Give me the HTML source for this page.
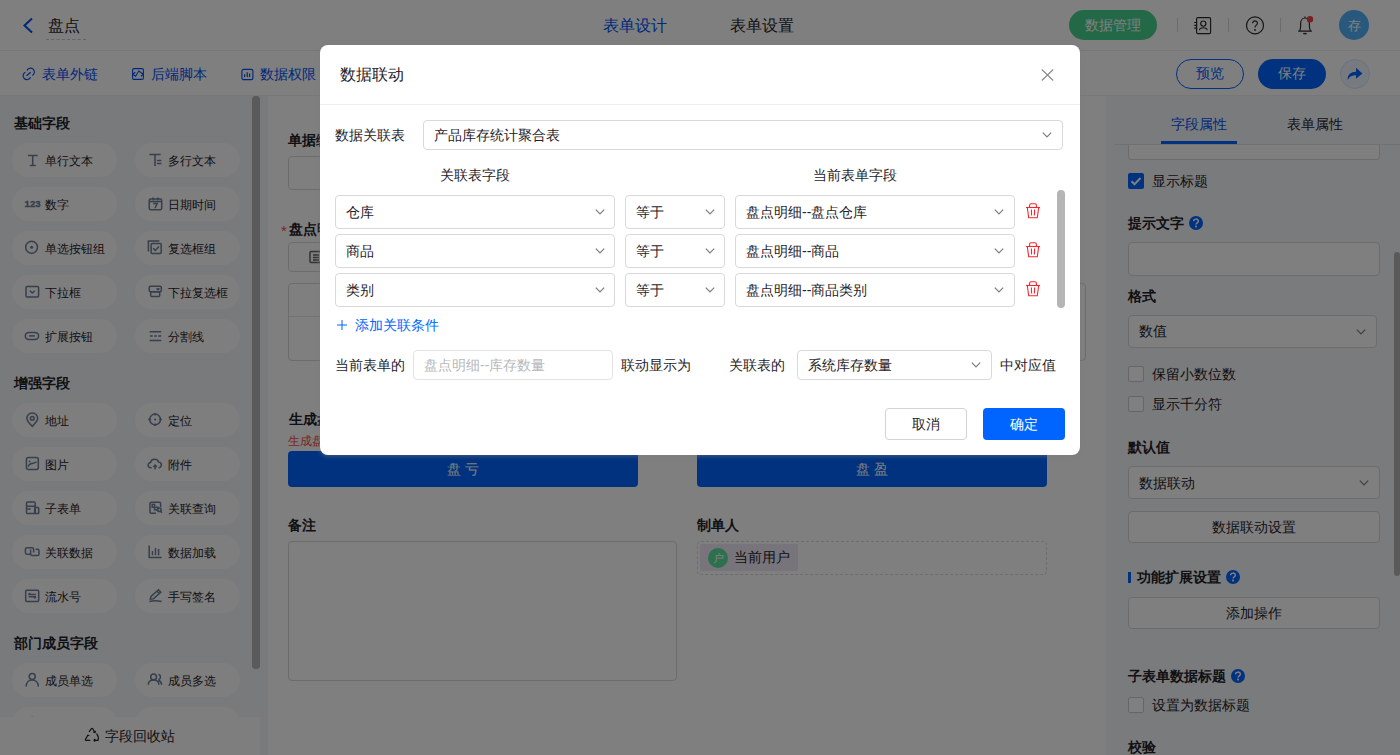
<!DOCTYPE html>
<html><head><meta charset="utf-8"><title>盘点</title>
<style>
*{box-sizing:border-box;margin:0;padding:0}
html,body{width:1400px;height:755px;overflow:hidden;background:#fff}
body{position:relative;font-family:"Liberation Sans",sans-serif;color:#1f2329;font-size:14px}
.a{position:absolute;white-space:nowrap}
svg{display:block}
.pill{position:absolute;height:34px;width:105px;border-radius:17px;background:#fcfcfd}
.pill .ic{position:absolute;left:14px;top:9px;width:16px;height:16px}
.pill .tx{position:absolute;left:33px;top:0;line-height:34px;font-size:12px;color:#1f2329}
.sec{position:absolute;left:14px;font-size:14px;font-weight:bold;line-height:20px;color:#1f2329}
.lbl{position:absolute;font-size:14px;font-weight:bold;line-height:20px;color:#1f2329}
.inp{position:absolute;background:#fff;border:1px solid #d9d9d9;border-radius:4px}
.sel{position:absolute;background:#fff;border:1px solid #d9d9d9;border-radius:4px}
.sel .tx{position:absolute;left:10px;top:0;font-size:14px;color:#1f2329}
.chev{position:absolute;width:10px;height:6px}
.q{position:absolute;width:15px;height:15px;border-radius:50%;background:#0064ff;color:#fff;font-size:11px;font-weight:bold;text-align:center;line-height:15px}
.cb{position:absolute;width:16px;height:16px;border:1px solid #c9cdd4;border-radius:2px;background:#fff}
</style></head><body>

<div class="a" style="left:0;top:0;width:1400px;height:51px;background:#fff;border-bottom:1px solid #eeeeee"></div>
<svg class="a" style="left:22px;top:17px" width="12" height="17" viewBox="0 0 12 17"><path d="M10 1.5 L2.5 8.5 L10 15.5" fill="none" stroke="#0050f5" stroke-width="2"/></svg>
<div class="a" style="left:48px;top:15px;font-size:16px;line-height:22px;color:#1f2329">盘点</div>
<div class="a" style="left:46px;top:39px;width:40px;height:0;border-top:1px dashed #c8c8c8"></div>
<div class="a" style="left:603px;top:15px;font-size:16px;line-height:22px;color:#0050f5">表单设计</div>
<div class="a" style="left:730px;top:15px;font-size:16px;line-height:22px;color:#1f2329">表单设置</div>
<div class="a" style="left:1069px;top:10px;width:88px;height:30px;border-radius:15px;background:#47d18f;color:#fff;font-size:14px;line-height:30px;text-align:center">数据管理</div>
<div class="a" style="left:1177px;top:18px;width:1px;height:14px;background:#d8d8d8"></div>
<div class="a" style="left:1228px;top:18px;width:1px;height:14px;background:#d8d8d8"></div>
<div class="a" style="left:1280px;top:18px;width:1px;height:14px;background:#d8d8d8"></div>
<svg class="a" style="left:1193px;top:16px" width="19" height="19" viewBox="0 0 19 19" fill="none" stroke="#2b2b2b" stroke-width="1.15"><rect x="3.6" y="1.6" width="14" height="16" rx="1.3"/><circle cx="10.3" cy="7.6" r="2.6"/><path d="M6.4 14.2 C6.8 10.9 13.8 10.9 14.2 14.2"/><path d="M1.2 6.5h3M1.2 9.3h3M1.2 12.1h3"/></svg>
<svg class="a" style="left:1245px;top:15px" width="20" height="20" viewBox="0 0 20 20" fill="none" stroke="#2b2b2b" stroke-width="1.2"><circle cx="10" cy="10.4" r="8.5"/><path d="M7.6 8.2 C7.6 5.2 12.4 5.2 12.4 8.2 C12.4 10.2 10 10.2 10 12.6"/><circle cx="10" cy="15" r="0.9" fill="#2b2b2b" stroke="none"/></svg>
<svg class="a" style="left:1296px;top:14px" width="20" height="22" viewBox="0 0 20 22" fill="none" stroke="#2b2b2b" stroke-width="1.2"><path d="M2.2 17.2 h13.6 M3.5 17.2 C4.5 16 4.6 14.5 4.6 12 V9.5 C4.6 6.3 6.6 4 9 4 C11.4 4 13.4 6.3 13.4 9.5 V12 C13.4 14.5 13.5 16 14.8 17.2"/><path d="M9 2.5v1.3"/><path d="M7.3 19.6 h3.4" stroke-width="1.4"/><circle cx="14" cy="5.2" r="3.2" fill="#ee4040" stroke="none"/></svg>
<div class="a" style="left:1339px;top:10px;width:30px;height:30px;border-radius:50%;background:#50b2f8;color:#fff;font-size:13px;line-height:31px;text-align:center">存</div>
<div class="a" style="left:0;top:51px;width:1400px;height:45px;background:#fff;border-bottom:1px solid #efefef"></div>
<svg class="a" style="left:21px;top:66px" width="15" height="15" viewBox="0 0 15 15" fill="none" stroke="#0050f5" stroke-width="1.15"><path d="M6 4.4A3.85 3.85 0 1 1 11.3 9.4"/><path d="M4.4 6.2A3.85 3.85 0 1 0 9.5 11.2"/><path d="M5.5 9.8L9.7 6.2"/></svg>
<div class="a" style="left:42px;top:64px;font-size:14px;line-height:20px;color:#0050f5">表单外链</div>
<svg class="a" style="left:132px;top:68px" width="12" height="12" viewBox="0 0 12 12" fill="none" stroke="#0050f5" stroke-width="1.1"><rect x="0.6" y="0.6" width="10.8" height="10.8" rx="1.4"/><path d="M0.6 6.3L3.4 4.2M0.6 6.3L3.6 8.2L6.8 3L11.4 6.3L8.8 8.2"/></svg>
<div class="a" style="left:151px;top:64px;font-size:14px;line-height:20px;color:#0050f5">后端脚本</div>
<svg class="a" style="left:241px;top:68px" width="13" height="13" viewBox="0 0 13 13" fill="none" stroke="#0050f5" stroke-width="1.15"><rect x="0.9" y="1.4" width="11" height="10.2" rx="1.6"/><path d="M3.6 6.2V8.9M6.2 4.2V8.9M8.6 5.6V8.9" stroke-width="1.2"/></svg>
<div class="a" style="left:260px;top:64px;font-size:14px;line-height:20px;color:#0050f5">数据权限</div>
<div class="a" style="left:1176px;top:59px;width:68px;height:30px;border-radius:15px;border:1px solid #0064ff;color:#0064ff;font-size:14px;line-height:27px;text-align:center;background:#fff">预览</div>
<div class="a" style="left:1258px;top:59px;width:68px;height:30px;border-radius:15px;background:#0064ff;color:#fff;font-size:14px;line-height:29px;text-align:center">保存</div>
<div class="a" style="left:1340px;top:59px;width:30px;height:30px;border-radius:50%;background:#eef4ff;border:1px solid #d6e4ff"></div>
<svg class="a" style="left:1347px;top:67px" width="16" height="14" viewBox="0 0 16 14"><path d="M0.6 13 C0.6 7.5 3.8 4.8 9 4.8 V0.8 L15.4 6.4 L9 11.8 V8.2 C5.2 8.2 2.6 9.6 0.6 13 Z" fill="#0064ff"/></svg>
<div class="a" style="left:0;top:96px;width:268px;height:659px;background:#f3f5f8"></div>
<div class="a" style="left:252px;top:96px;width:8px;height:573px;border-radius:4px;background:#b4b4b4"></div>
<div class="sec" style="top:113px">基础字段</div>
<div class="pill" style="left:12px;top:143px"></div>
<svg class="a" style="left:24px;top:152px" width="17" height="17" viewBox="0 0 17 17" fill="none" stroke="#6e7d99" stroke-width="1.5"><path d="M4 3.4H13.7M8.7 3.4V13.4M5.8 13.4H11.8"/></svg>
<div class="a" style="left:45px;top:151px;font-size:12px;line-height:20px;color:#1f2329">单行文本</div>
<div class="pill" style="left:135px;top:143px"></div>
<svg class="a" style="left:147px;top:152px" width="17" height="17" viewBox="0 0 17 17" fill="none" stroke="#6e7d99" stroke-width="1.5"><path d="M2.4 2.6H13.6M8 2.6V14M9.9 8.6H14.4M9.9 11.4H14.4"/></svg>
<div class="a" style="left:168px;top:151px;font-size:12px;line-height:20px;color:#1f2329">多行文本</div>
<div class="pill" style="left:12px;top:187px"></div>
<svg class="a" style="left:24px;top:196px" width="17" height="17" viewBox="0 0 17 17" fill="none" stroke="#6e7d99" stroke-width="1.5"><text x="0.6" y="11" font-size="9.6" font-weight="bold" font-family="Liberation Sans" fill="#6e7d99" stroke="#6e7d99" stroke-width="0.35">123</text></svg>
<div class="a" style="left:45px;top:195px;font-size:12px;line-height:20px;color:#1f2329">数字</div>
<div class="pill" style="left:135px;top:187px"></div>
<svg class="a" style="left:147px;top:196px" width="17" height="17" viewBox="0 0 17 17" fill="none" stroke="#6e7d99" stroke-width="1.5"><rect x="2.2" y="3" width="12.5" height="10.7" rx="1.5"/><path d="M2.2 5.6H14.7M5.9 1.6V4.2M10.9 1.6V4.2M6.2 7.6H10.2L8 12.2"/></svg>
<div class="a" style="left:168px;top:195px;font-size:12px;line-height:20px;color:#1f2329">日期时间</div>
<div class="pill" style="left:12px;top:231px"></div>
<svg class="a" style="left:24px;top:240px" width="17" height="17" viewBox="0 0 17 17" fill="none" stroke="#6e7d99" stroke-width="1.5"><circle cx="7.6" cy="7.25" r="5.9"/><circle cx="7.6" cy="7.25" r="1.5" fill="#6e7d99" stroke="none"/></svg>
<div class="a" style="left:45px;top:239px;font-size:12px;line-height:20px;color:#1f2329">单选按钮组</div>
<div class="pill" style="left:135px;top:231px"></div>
<svg class="a" style="left:147px;top:240px" width="17" height="17" viewBox="0 0 17 17" fill="none" stroke="#6e7d99" stroke-width="1.5"><path d="M1.4 11.4V1.1H12.3"/><rect x="4.1" y="3.4" width="10.1" height="10.2" rx="1"/><path d="M6.2 8.3L8.2 10.4L12 6.4"/></svg>
<div class="a" style="left:168px;top:239px;font-size:12px;line-height:20px;color:#1f2329">复选框组</div>
<div class="pill" style="left:12px;top:275px"></div>
<svg class="a" style="left:24px;top:284px" width="17" height="17" viewBox="0 0 17 17" fill="none" stroke="#6e7d99" stroke-width="1.5"><rect x="2" y="2.4" width="12.6" height="10.6" rx="1.2"/><path d="M5.9 6.8L8.3 9L10.7 6.8"/></svg>
<div class="a" style="left:45px;top:283px;font-size:12px;line-height:20px;color:#1f2329">下拉框</div>
<div class="pill" style="left:135px;top:275px"></div>
<svg class="a" style="left:147px;top:284px" width="17" height="17" viewBox="0 0 17 17" fill="none" stroke="#6e7d99" stroke-width="1.5"><rect x="2.2" y="2.2" width="12.1" height="5.6" rx="1.2"/><rect x="3.7" y="7.8" width="9" height="4.6" rx="1"/><path d="M9.6 4.4L11 5.8L12.4 4.4"/></svg>
<div class="a" style="left:168px;top:283px;font-size:12px;line-height:20px;color:#1f2329">下拉复选框</div>
<div class="pill" style="left:12px;top:319px"></div>
<svg class="a" style="left:24px;top:328px" width="17" height="17" viewBox="0 0 17 17" fill="none" stroke="#6e7d99" stroke-width="1.5"><rect x="1.3" y="4.4" width="13.3" height="7" rx="3.5"/><path d="M5 7.9H11"/></svg>
<div class="a" style="left:45px;top:327px;font-size:12px;line-height:20px;color:#1f2329">扩展按钮</div>
<div class="pill" style="left:135px;top:319px"></div>
<svg class="a" style="left:147px;top:328px" width="17" height="17" viewBox="0 0 17 17" fill="none" stroke="#6e7d99" stroke-width="1.5"><path d="M2.6 3.7H14.3M2.6 12.4H14.3M3 8.1H5.7M7.2 8.1H9.8M11.2 8.1H14.3"/></svg>
<div class="a" style="left:168px;top:327px;font-size:12px;line-height:20px;color:#1f2329">分割线</div>
<div class="sec" style="top:373px">增强字段</div>
<div class="pill" style="left:12px;top:403px"></div>
<svg class="a" style="left:24px;top:412px" width="17" height="17" viewBox="0 0 17 17" fill="none" stroke="#6e7d99" stroke-width="1.5"><path d="M8.25 14.4C4.6 10.8 2.85 8.6 2.85 6.3A5.4 5.4 0 0 1 13.65 6.3C13.65 8.6 11.9 10.8 8.25 14.4Z"/><circle cx="8.25" cy="6.3" r="1.9"/></svg>
<div class="a" style="left:45px;top:411px;font-size:12px;line-height:20px;color:#1f2329">地址</div>
<div class="pill" style="left:135px;top:403px"></div>
<svg class="a" style="left:147px;top:412px" width="17" height="17" viewBox="0 0 17 17" fill="none" stroke="#6e7d99" stroke-width="1.5"><circle cx="8.1" cy="7.5" r="5.4"/><path d="M8.1 0.9V3.6M8.1 11.4V14.1M1.3 7.5H4M12.2 7.5H14.9"/><circle cx="8.1" cy="7.5" r="1.1" fill="#6e7d99" stroke="none"/></svg>
<div class="a" style="left:168px;top:411px;font-size:12px;line-height:20px;color:#1f2329">定位</div>
<div class="pill" style="left:12px;top:447px"></div>
<svg class="a" style="left:24px;top:456px" width="17" height="17" viewBox="0 0 17 17" fill="none" stroke="#6e7d99" stroke-width="1.5"><rect x="2.4" y="1.4" width="11.9" height="12.1" rx="2"/><circle cx="5.6" cy="5.4" r="0.9" fill="#6e7d99" stroke="none"/><path d="M4 10.6C5 8.2 6 7.6 8 7.4S11 7 12.5 5.7"/></svg>
<div class="a" style="left:45px;top:455px;font-size:12px;line-height:20px;color:#1f2329">图片</div>
<div class="pill" style="left:135px;top:447px"></div>
<svg class="a" style="left:147px;top:456px" width="17" height="17" viewBox="0 0 17 17" fill="none" stroke="#6e7d99" stroke-width="1.5"><path d="M4.6 11.8H3.9A2.6 2.6 0 0 1 3.5 6.6A4.2 4.2 0 0 1 11.6 6.1A2.9 2.9 0 0 1 12.2 11.8H11.6"/><path d="M8.1 9.2V13.6M6.3 10.9L8.1 9L9.9 10.9"/></svg>
<div class="a" style="left:168px;top:455px;font-size:12px;line-height:20px;color:#1f2329">附件</div>
<div class="pill" style="left:12px;top:491px"></div>
<svg class="a" style="left:24px;top:500px" width="17" height="17" viewBox="0 0 17 17" fill="none" stroke="#6e7d99" stroke-width="1.5"><rect x="2.5" y="2" width="8.7" height="11.6" rx="1.2"/><path d="M2.5 6.2H11.2M3 8.9H6.7"/><rect x="10.7" y="7.5" width="4" height="6.1" rx="0.8"/></svg>
<div class="a" style="left:45px;top:499px;font-size:12px;line-height:20px;color:#1f2329">子表单</div>
<div class="pill" style="left:135px;top:491px"></div>
<svg class="a" style="left:147px;top:500px" width="17" height="17" viewBox="0 0 17 17" fill="none" stroke="#6e7d99" stroke-width="1.5"><path d="M13.6 7.3V3.4Q13.6 2.2 12.4 2.2H4.2Q3 2.2 3 3.4V12Q3 13.2 4.2 13.2H9"/><rect x="5.2" y="4.4" width="2.4" height="2.8"/><rect x="7.6" y="7.3" width="3.2" height="2.6"/><circle cx="12.3" cy="9.8" r="1.8"/><path d="M13.5 11.2L14.8 12.8"/></svg>
<div class="a" style="left:168px;top:499px;font-size:12px;line-height:20px;color:#1f2329">关联查询</div>
<div class="pill" style="left:12px;top:535px"></div>
<svg class="a" style="left:24px;top:544px" width="17" height="17" viewBox="0 0 17 17" fill="none" stroke="#6e7d99" stroke-width="1.5"><path d="M6.2 10.2H3Q1.4 10.2 1.4 8.6V5.3Q1.4 3.7 3 3.7H8Q9.6 3.7 9.6 5.3V8.4"/><path d="M6.6 5.6V9.9Q6.6 11.5 8.2 11.5H13.4Q15 11.5 15 9.9V6.9Q15 5.3 13.4 5.3H11.6"/></svg>
<div class="a" style="left:45px;top:543px;font-size:12px;line-height:20px;color:#1f2329">关联数据</div>
<div class="pill" style="left:135px;top:535px"></div>
<svg class="a" style="left:147px;top:544px" width="17" height="17" viewBox="0 0 17 17" fill="none" stroke="#6e7d99" stroke-width="1.5"><path d="M2.2 1.4V13.4H14.7M5.5 7V11.2M8.5 4V11.2M11.6 5V11.2"/></svg>
<div class="a" style="left:168px;top:543px;font-size:12px;line-height:20px;color:#1f2329">数据加载</div>
<div class="pill" style="left:12px;top:579px"></div>
<svg class="a" style="left:24px;top:588px" width="17" height="17" viewBox="0 0 17 17" fill="none" stroke="#6e7d99" stroke-width="1.5"><rect x="1.7" y="2.2" width="13" height="11.2" rx="1.2"/><path d="M4.3 6.5H11.8M4.3 6.5L6.2 5M4.6 8.8H12M12 8.8L10.2 10.4"/></svg>
<div class="a" style="left:45px;top:587px;font-size:12px;line-height:20px;color:#1f2329">流水号</div>
<div class="pill" style="left:135px;top:579px"></div>
<svg class="a" style="left:147px;top:588px" width="17" height="17" viewBox="0 0 17 17" fill="none" stroke="#6e7d99" stroke-width="1.5"><path d="M3.3 11.2L4 8.5L11.5 1.8L13.8 4.2L6.3 10.9Z"/><path d="M10 3.2L12.3 5.5M2.3 13.4Q8 12 14.6 13.6"/></svg>
<div class="a" style="left:168px;top:587px;font-size:12px;line-height:20px;color:#1f2329">手写签名</div>
<div class="sec" style="top:633px">部门成员字段</div>
<div class="pill" style="left:12px;top:663px"></div>
<svg class="a" style="left:24px;top:672px" width="17" height="17" viewBox="0 0 17 17" fill="none" stroke="#6e7d99" stroke-width="1.5"><circle cx="8.2" cy="4.6" r="3"/><path d="M2.2 14.5C2.2 10.5 4.8 8 8.2 8S14.3 10.5 14.3 14.5"/></svg>
<div class="a" style="left:45px;top:671px;font-size:12px;line-height:20px;color:#1f2329">成员单选</div>
<div class="pill" style="left:135px;top:663px"></div>
<svg class="a" style="left:147px;top:672px" width="17" height="17" viewBox="0 0 17 17" fill="none" stroke="#6e7d99" stroke-width="1.5"><circle cx="6.6" cy="5" r="2.9"/><path d="M11.4 2.2A2.9 2.9 0 0 1 11.4 7.8"/><path d="M1.3 12.8C1.3 9.5 3.6 7.9 6.6 7.9S11.9 9.5 11.9 12.8M11.4 8.3C13.2 8.9 14.5 10.5 14.5 12.8"/></svg>
<div class="a" style="left:168px;top:671px;font-size:12px;line-height:20px;color:#1f2329">成员多选</div>
<div class="pill" style="left:12px;top:707px"></div>
<svg class="a" style="left:24px;top:716px" width="17" height="17" viewBox="0 0 17 17" fill="none" stroke="#6e7d99" stroke-width="1.5"><circle cx="8.2" cy="4.6" r="3"/><path d="M2.2 14.5C2.2 10.5 4.8 8 8.2 8S14.3 10.5 14.3 14.5"/></svg>
<div class="a" style="left:45px;top:715px;font-size:12px;line-height:20px;color:#1f2329">部门单选</div>
<div class="pill" style="left:135px;top:707px"></div>
<svg class="a" style="left:147px;top:716px" width="17" height="17" viewBox="0 0 17 17" fill="none" stroke="#6e7d99" stroke-width="1.5"><circle cx="6.6" cy="5" r="2.9"/><path d="M11.4 2.2A2.9 2.9 0 0 1 11.4 7.8"/><path d="M1.3 12.8C1.3 9.5 3.6 7.9 6.6 7.9S11.9 9.5 11.9 12.8M11.4 8.3C13.2 8.9 14.5 10.5 14.5 12.8"/></svg>
<div class="a" style="left:168px;top:715px;font-size:12px;line-height:20px;color:#1f2329">部门多选</div>
<div class="a" style="left:252px;top:96px;width:8px;height:573px;border-radius:4px;background:#b4b4b4"></div>
<div class="a" style="left:0;top:717px;width:260px;height:38px;background:#fcfcfd"></div>
<svg class="a" style="left:84px;top:727px" width="16" height="16" viewBox="0 0 16 16" fill="none" stroke="#222" stroke-width="1.2"><path d="M5 4.8L7.4 1.6Q8 1 8.6 1.6L11 5.5"/><path d="M12.6 6.5L14.2 9.6Q14.6 10.6 14 13.3H10"/><path d="M6.3 13.3H2Q1.2 13.3 1.4 12.4L3.8 8.2"/><path d="M9.3 5.2L11 5.6L11.4 3.8M3.4 8.8L3.8 8.2L5.4 8.8M11.2 12L10 13.3L11.2 14.5"/></svg>
<div class="a" style="left:105px;top:726px;font-size:14px;line-height:20px;color:#1f2329">字段回收站</div>
<div class="lbl" style="left:288px;top:130px">单据编号</div>
<div class="inp" style="left:288px;top:156px;width:350px;height:34px"></div>
<div class="a" style="left:281px;top:221px;font-size:15px;line-height:20px;color:#f54a45">*</div>
<div class="lbl" style="left:289px;top:219px">盘点明细</div>
<div class="inp" style="left:288px;top:242px;width:350px;height:30px"></div>
<svg class="a" style="left:309px;top:250px" width="14" height="14" viewBox="0 0 14 14" fill="none" stroke="#666" stroke-width="1.5"><rect x="1" y="1.5" width="12" height="11" rx="1"/><path d="M4 5h6M4 7.5h6M4 10h6"/></svg>
<div class="inp" style="left:288px;top:283px;width:798px;height:78px"></div>
<div class="a" style="left:289px;top:316px;width:780px;height:1px;background:#e5e6eb"></div>
<div class="lbl" style="left:289px;top:409px">生成盘点单</div>
<div class="a" style="left:288px;top:433px;font-size:12px;line-height:16px;color:#f54a45">生成盘点单后不可修改</div>
<div class="a" style="left:288px;top:451px;width:350px;height:36px;border-radius:4px;background:#0064ff;color:#fff;font-size:14px;line-height:36px;text-align:center;letter-spacing:4px;padding-left:4px">盘亏</div>
<div class="a" style="left:697px;top:451px;width:350px;height:36px;border-radius:4px;background:#0064ff;color:#fff;font-size:14px;line-height:36px;text-align:center;letter-spacing:4px;padding-left:4px">盘盈</div>
<div class="lbl" style="left:288px;top:515px">备注</div>
<div class="inp" style="left:288px;top:541px;width:389px;height:140px"></div>
<div class="lbl" style="left:697px;top:515px">制单人</div>
<div class="a" style="left:697px;top:541px;width:350px;height:34px;border:1px dashed #dadada;border-radius:4px"></div>
<div class="a" style="left:700px;top:544px;width:98px;height:27px;background:#efe8f7;border-radius:2px"></div>
<div class="a" style="left:708px;top:548px;width:20px;height:20px;border-radius:50%;background:#5be09a;color:#fff;font-size:11px;line-height:20px;text-align:center">户</div>
<div class="a" style="left:734px;top:547px;font-size:14px;line-height:20px;color:#1f2329">当前用户</div>
<div class="a" style="left:1106px;top:96px;width:294px;height:659px;background:#f5f6f9"></div>
<div class="inp" style="left:1128px;top:120px;width:252px;height:40px;border-top:none;border-radius:0 0 4px 4px;z-index:0"></div>
<div class="a" style="left:1114px;top:96px;width:286px;height:49px;background:#f5f6f9;border-bottom:1px solid #e1e3e8"></div>
<div class="a" style="left:1171px;top:114px;font-size:14px;line-height:20px;color:#0050f5">字段属性</div>
<div class="a" style="left:1161px;top:141px;width:76px;height:3px;background:#0064ff"></div>
<div class="a" style="left:1287px;top:114px;font-size:14px;line-height:20px;color:#1f2329">表单属性</div>
<div class="a" style="left:1128px;top:173px;width:16px;height:16px;border-radius:2px;background:#0064ff"></div>
<svg class="a" style="left:1128px;top:173px" width="16" height="16" viewBox="0 0 16 16"><path d="M3.5 8.2l3 3 6-6.2" fill="none" stroke="#fff" stroke-width="2"/></svg>
<div class="a" style="left:1152px;top:171px;font-size:14px;line-height:20px;color:#1f2329">显示标题</div>
<div class="lbl" style="left:1128px;top:213px">提示文字</div>
<svg class="a" style="left:1189px;top:216px" width="14" height="14" viewBox="0 0 14 14"><circle cx="7" cy="7" r="7" fill="#0064ff"/><path d="M4.6 5.3C4.6 2.4 9.4 2.4 9.4 5.1C9.4 6.8 7 6.9 7 8.6" fill="none" stroke="#fff" stroke-width="1.45"/><rect x="6.1" y="9.6" width="1.8" height="1.8" fill="#fff"/></svg>
<div class="inp" style="left:1128px;top:242px;width:252px;height:34px"></div>
<div class="lbl" style="left:1128px;top:286px">格式</div>
<div class="sel" style="left:1128px;top:315px;width:249px;height:33px"></div>
<div class="a" style="left:1139px;top:321px;font-size:14px;line-height:20px;color:#1f2329">数值</div>
<svg class="a" style="left:1356px;top:329px" width="10" height="6" viewBox="0 0 10 6"><path d="M0.8 0.6L5 4.9 9.2 0.6" fill="none" stroke="#808080" stroke-width="1.3"/></svg>
<div class="cb" style="left:1128px;top:366px"></div>
<div class="a" style="left:1152px;top:364px;font-size:14px;line-height:20px;color:#1f2329">保留小数位数</div>
<div class="cb" style="left:1128px;top:396px"></div>
<div class="a" style="left:1152px;top:394px;font-size:14px;line-height:20px;color:#1f2329">显示千分符</div>
<div class="lbl" style="left:1128px;top:437px">默认值</div>
<div class="sel" style="left:1128px;top:466px;width:252px;height:33px"></div>
<div class="a" style="left:1139px;top:473px;font-size:14px;line-height:20px;color:#1f2329">数据联动</div>
<svg class="a" style="left:1359px;top:480px" width="10" height="6" viewBox="0 0 10 6"><path d="M0.8 0.6L5 4.9 9.2 0.6" fill="none" stroke="#808080" stroke-width="1.3"/></svg>
<div class="inp" style="left:1128px;top:511px;width:252px;height:32px;text-align:center;font-size:14px;line-height:30px;color:#1f2329">数据联动设置</div>
<div class="a" style="left:1128px;top:572px;width:3px;height:11px;background:#0064ff"></div>
<div class="lbl" style="left:1137px;top:567px">功能扩展设置</div>
<svg class="a" style="left:1226px;top:570px" width="14" height="14" viewBox="0 0 14 14"><circle cx="7" cy="7" r="7" fill="#0064ff"/><path d="M4.6 5.3C4.6 2.4 9.4 2.4 9.4 5.1C9.4 6.8 7 6.9 7 8.6" fill="none" stroke="#fff" stroke-width="1.45"/><rect x="6.1" y="9.6" width="1.8" height="1.8" fill="#fff"/></svg>
<div class="inp" style="left:1128px;top:597px;width:252px;height:32px;text-align:center;font-size:14px;line-height:30px;color:#1f2329">添加操作</div>
<div class="lbl" style="left:1128px;top:666px">子表单数据标题</div>
<svg class="a" style="left:1231px;top:669px" width="14" height="14" viewBox="0 0 14 14"><circle cx="7" cy="7" r="7" fill="#0064ff"/><path d="M4.6 5.3C4.6 2.4 9.4 2.4 9.4 5.1C9.4 6.8 7 6.9 7 8.6" fill="none" stroke="#fff" stroke-width="1.45"/><rect x="6.1" y="9.6" width="1.8" height="1.8" fill="#fff"/></svg>
<div class="cb" style="left:1128px;top:697px"></div>
<div class="a" style="left:1152px;top:695px;font-size:14px;line-height:20px;color:#1f2329">设置为数据标题</div>
<div class="lbl" style="left:1128px;top:737px">校验</div>
<div class="a" style="left:1394px;top:252px;width:6px;height:324px;border-radius:3px;background:#b4b4b4"></div>
<div class="a" style="left:0;top:0;width:1400px;height:755px;background:rgba(0,0,0,.5)"></div>
<div class="a" style="left:320px;top:45px;width:760px;height:410px;background:#fff;border-radius:8px;box-shadow:0 1px 5px rgba(125,125,125,.6)"></div>
<div class="a" style="left:340px;top:64px;font-size:16px;line-height:22px;color:#1f2329">数据联动</div>
<svg class="a" style="left:1041px;top:69px" width="13" height="12" viewBox="0 0 13 12"><path d="M0.8 0.5L12.2 11.5M12.2 0.5L0.8 11.5" stroke="#8a8a8a" stroke-width="1.15"/></svg>
<div class="a" style="left:320px;top:104px;width:760px;height:1px;background:#eeeeee"></div>
<div class="a" style="left:335px;top:125px;font-size:14px;line-height:20px;color:#1f2329">数据关联表</div>
<div class="sel" style="left:423px;top:120px;width:640px;height:30px"></div>
<div class="a" style="left:434px;top:125px;font-size:14px;line-height:20px;color:#1f2329">产品库存统计聚合表</div>
<svg class="a" style="left:1042px;top:132px" width="10" height="6" viewBox="0 0 10 6"><path d="M0.8 0.6L5 4.9 9.2 0.6" fill="none" stroke="#808080" stroke-width="1.3"/></svg>
<div class="a" style="left:440px;top:165px;font-size:14px;line-height:20px;color:#1f2329">关联表字段</div>
<div class="a" style="left:813px;top:165px;font-size:14px;line-height:20px;color:#1f2329">当前表单字段</div>
<div class="sel" style="left:335px;top:195px;width:280px;height:34px"></div>
<div class="a" style="left:346px;top:202px;font-size:14px;line-height:20px;color:#1f2329">仓库</div>
<svg class="a" style="left:595px;top:209px" width="10" height="6" viewBox="0 0 10 6"><path d="M0.8 0.6L5 4.9 9.2 0.6" fill="none" stroke="#808080" stroke-width="1.3"/></svg>
<div class="sel" style="left:625px;top:195px;width:100px;height:34px"></div>
<div class="a" style="left:636px;top:202px;font-size:14px;line-height:20px;color:#1f2329">等于</div>
<svg class="a" style="left:705px;top:209px" width="10" height="6" viewBox="0 0 10 6"><path d="M0.8 0.6L5 4.9 9.2 0.6" fill="none" stroke="#808080" stroke-width="1.3"/></svg>
<div class="sel" style="left:735px;top:195px;width:280px;height:34px"></div>
<div class="a" style="left:746px;top:202px;font-size:14px;line-height:20px;color:#1f2329">盘点明细--盘点仓库</div>
<svg class="a" style="left:994px;top:209px" width="10" height="6" viewBox="0 0 10 6"><path d="M0.8 0.6L5 4.9 9.2 0.6" fill="none" stroke="#808080" stroke-width="1.3"/></svg>
<svg class="a" style="left:1026px;top:202px" width="14" height="17" viewBox="0 0 14 17" fill="none" stroke="#f7252f" stroke-width="1.1"><path d="M0 5.5h14"/><path d="M3.6 5.3V3.2Q3.6 1.8 5 1.8H9Q10.4 1.8 10.4 3.2V5.3"/><path d="M1.3 5.5L2.7 15.8H11.3L12.7 5.5"/><path d="M5.4 7.6L5.6 13.6M8.6 7.6L8.4 13.6"/></svg>
<div class="sel" style="left:335px;top:234px;width:280px;height:34px"></div>
<div class="a" style="left:346px;top:241px;font-size:14px;line-height:20px;color:#1f2329">商品</div>
<svg class="a" style="left:595px;top:248px" width="10" height="6" viewBox="0 0 10 6"><path d="M0.8 0.6L5 4.9 9.2 0.6" fill="none" stroke="#808080" stroke-width="1.3"/></svg>
<div class="sel" style="left:625px;top:234px;width:100px;height:34px"></div>
<div class="a" style="left:636px;top:241px;font-size:14px;line-height:20px;color:#1f2329">等于</div>
<svg class="a" style="left:705px;top:248px" width="10" height="6" viewBox="0 0 10 6"><path d="M0.8 0.6L5 4.9 9.2 0.6" fill="none" stroke="#808080" stroke-width="1.3"/></svg>
<div class="sel" style="left:735px;top:234px;width:280px;height:34px"></div>
<div class="a" style="left:746px;top:241px;font-size:14px;line-height:20px;color:#1f2329">盘点明细--商品</div>
<svg class="a" style="left:994px;top:248px" width="10" height="6" viewBox="0 0 10 6"><path d="M0.8 0.6L5 4.9 9.2 0.6" fill="none" stroke="#808080" stroke-width="1.3"/></svg>
<svg class="a" style="left:1026px;top:241px" width="14" height="17" viewBox="0 0 14 17" fill="none" stroke="#f7252f" stroke-width="1.1"><path d="M0 5.5h14"/><path d="M3.6 5.3V3.2Q3.6 1.8 5 1.8H9Q10.4 1.8 10.4 3.2V5.3"/><path d="M1.3 5.5L2.7 15.8H11.3L12.7 5.5"/><path d="M5.4 7.6L5.6 13.6M8.6 7.6L8.4 13.6"/></svg>
<div class="sel" style="left:335px;top:273px;width:280px;height:34px"></div>
<div class="a" style="left:346px;top:280px;font-size:14px;line-height:20px;color:#1f2329">类别</div>
<svg class="a" style="left:595px;top:287px" width="10" height="6" viewBox="0 0 10 6"><path d="M0.8 0.6L5 4.9 9.2 0.6" fill="none" stroke="#808080" stroke-width="1.3"/></svg>
<div class="sel" style="left:625px;top:273px;width:100px;height:34px"></div>
<div class="a" style="left:636px;top:280px;font-size:14px;line-height:20px;color:#1f2329">等于</div>
<svg class="a" style="left:705px;top:287px" width="10" height="6" viewBox="0 0 10 6"><path d="M0.8 0.6L5 4.9 9.2 0.6" fill="none" stroke="#808080" stroke-width="1.3"/></svg>
<div class="sel" style="left:735px;top:273px;width:280px;height:34px"></div>
<div class="a" style="left:746px;top:280px;font-size:14px;line-height:20px;color:#1f2329">盘点明细--商品类别</div>
<svg class="a" style="left:994px;top:287px" width="10" height="6" viewBox="0 0 10 6"><path d="M0.8 0.6L5 4.9 9.2 0.6" fill="none" stroke="#808080" stroke-width="1.3"/></svg>
<svg class="a" style="left:1026px;top:280px" width="14" height="17" viewBox="0 0 14 17" fill="none" stroke="#f7252f" stroke-width="1.1"><path d="M0 5.5h14"/><path d="M3.6 5.3V3.2Q3.6 1.8 5 1.8H9Q10.4 1.8 10.4 3.2V5.3"/><path d="M1.3 5.5L2.7 15.8H11.3L12.7 5.5"/><path d="M5.4 7.6L5.6 13.6M8.6 7.6L8.4 13.6"/></svg>
<div class="a" style="left:1057px;top:190px;width:8px;height:118px;border-radius:4px;background:#b5b5b5"></div>
<svg class="a" style="left:337px;top:320px" width="10" height="10" viewBox="0 0 10 10"><path d="M5 0v10M0 5h10" stroke="#0064ff" stroke-width="1"/></svg>
<div class="a" style="left:355px;top:315px;font-size:14px;line-height:20px;color:#0064ff">添加关联条件</div>
<div class="a" style="left:335px;top:355px;font-size:14px;line-height:20px;color:#1f2329">当前表单的</div>
<div class="sel" style="left:413px;top:350px;width:200px;height:30px;border-color:#e3e3e3"></div>
<div class="a" style="left:424px;top:355px;font-size:14px;line-height:20px;color:#b8b8b8">盘点明细--库存数量</div>
<div class="a" style="left:621px;top:355px;font-size:14px;line-height:20px;color:#1f2329">联动显示为</div>
<div class="a" style="left:729px;top:355px;font-size:14px;line-height:20px;color:#1f2329">关联表的</div>
<div class="sel" style="left:797px;top:350px;width:195px;height:30px"></div>
<div class="a" style="left:808px;top:355px;font-size:14px;line-height:20px;color:#1f2329">系统库存数量</div>
<svg class="a" style="left:971px;top:362px" width="10" height="6" viewBox="0 0 10 6"><path d="M0.8 0.6L5 4.9 9.2 0.6" fill="none" stroke="#808080" stroke-width="1.3"/></svg>
<div class="a" style="left:1000px;top:355px;font-size:14px;line-height:20px;color:#1f2329">中对应值</div>
<div class="a" style="left:885px;top:408px;width:82px;height:32px;border:1px solid #d0d3d9;border-radius:4px;text-align:center;line-height:30px;font-size:14px;color:#1f2329">取消</div>
<div class="a" style="left:983px;top:408px;width:82px;height:32px;background:#0064ff;border-radius:4px;text-align:center;line-height:32px;font-size:14px;color:#fff">确定</div>
</body></html>
